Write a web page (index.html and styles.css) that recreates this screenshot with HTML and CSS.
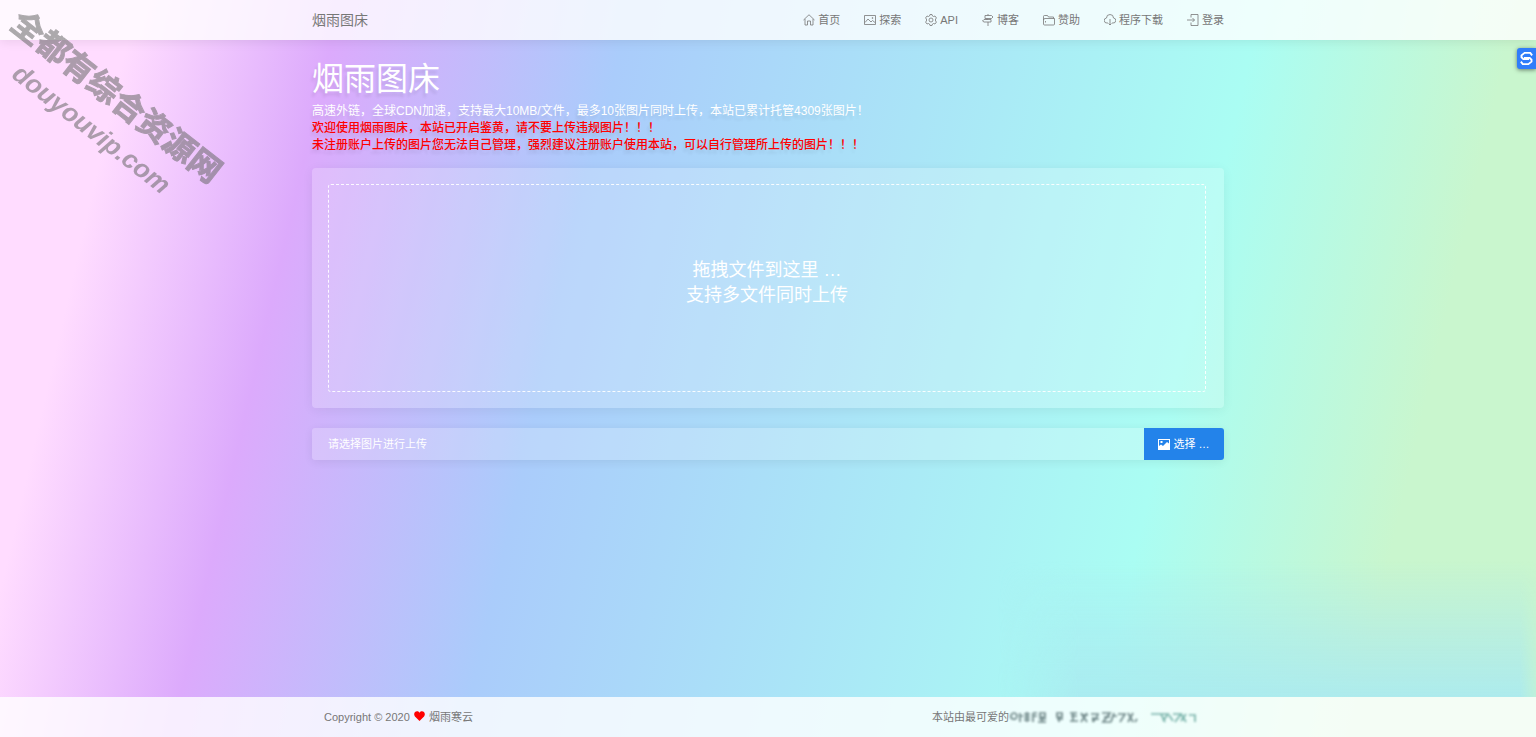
FILE: index.html
```
<!DOCTYPE html>
<html lang="zh-CN">
<head>
<meta charset="utf-8">
<title>烟雨图床</title>
<link rel="stylesheet" href="styles.css">
</head>
<body>
<header class="topbar">
  <div class="container topbar-inner">
    <a class="brand" href="#">烟雨图床</a>
    <nav class="nav">
      <a href="#"><svg class="icon" viewBox="0 0 24 24"><path d="M1 12 12 1.500 23 12M4 10v12h5v-8h6v8h5V10"/></svg>首页</a>
      <a href="#"><svg class="icon" viewBox="0 0 24 24"><path d="M1 3h22v18H1zM2 17l6-7 6 6 3-3 5 4"/><circle cx="17" cy="8" r="1"/></svg>探索</a>
      <a href="#"><svg class="icon" viewBox="0 0 24 24"><path d="M10 1h4l1 3 2 1 3-1 3 4-2 2v4l2 2-3 4-3-1-2 1-1 3h-4l-1-3-2-1-3 1-3-4 2-2v-4L1 8l3-4 3 1 2-1z"/><circle cx="12" cy="12" r="4"/></svg>API</a>
      <a href="#"><svg class="icon" viewBox="0 0 24 24"><path d="M12 0v3M6 3h13l3 3-3 3H6zM10 9v3M18 16H4l-3-2 3-3h14zM12 16v8"/></svg>博客</a>
      <a href="#"><svg class="icon" viewBox="0 0 24 24"><path d="M1 20V5q0-2 2-2h6l2 3h10v3M1 20q0 2 2 2h18q2 0 2-2V9H4q-3 0-3 3M5 14v3"/></svg>赞助</a>
      <a href="#"><svg class="icon" viewBox="0 0 24 24"><path d="M8 18H6a5 5 0 0 1-1-10 7 7 0 0 1 14 0 5 5 0 0 1-1 10h-2M12 10v12M9 19l3 3 3-3"/></svg>程序下载</a>
      <a href="#"><svg class="icon" viewBox="0 0 24 24"><path d="M8 7V1h14v22H8v-6M0 12h15M11 8l4 4-4 4"/></svg>登录</a>
    </nav>
  </div>
</header>

<main class="container main">
  <h1 class="title">烟雨图床</h1>
  <p class="intro">高速外链，全球CDN加速，支持最大10MB/文件，最多10张图片同时上传，本站已累计托管4309张图片！</p>
  <p class="intro notice">欢迎使用烟雨图床，本站已开启鉴黄，请不要上传违规图片！！！</p>
  <p class="intro notice">未注册账户上传的图片您无法自己管理，强烈建议注册账户使用本站，可以自行管理所上传的图片！！！</p>

  <section class="panel">
    <div class="dropzone">拖拽文件到这里 …<br>支持多文件同时上传</div>
  </section>

  <div class="picker">
    <input class="picker-input" type="text" aria-label="图片" placeholder="请选择图片进行上传" readonly>
    <button class="picker-button" type="button"><svg class="icon-solid" viewBox="0 0 24 22"><path fill-rule="evenodd" d="M0 0h24v22H0zM2 2v12l4-3 4 3 8-8 4 3V2zM5 4h4v4H5z"/></svg>选择 …</button>
  </div>
</main>

<footer class="footer">
  <div class="container footer-inner">
    <p>Copyright © 2020 <svg class="heart" viewBox="0 0 24 22"><path d="M12 22 2 12C-4 4 7-4 12 4c5-8 16 0 10 8z"/></svg> 烟雨寒云</p>
    <p class="credit">本站由最可爱的<svg class="smear" viewBox="0 0 192 12"><path d="M2 4q3-4 6 0 0 5-4 4-3-1-2-4M11 2v9M10 5h4M15 3h6M15 6h6M18 1v10M15 9h6M24 2h4M24 5h4M24 2v9M31 2h5v4h-5zM30 8h7M33 6v5M29 11h8M48 2h5v4h-5zM48 8h6M50 6v5M61 2h7M62 5h6M61 10h8M64 2v8M72 2l6 9M78 2l-6 9M72 4h7M82 3h8M84 6v5M89 4l-5 7M83 8h7M93 2h8l-7 9h8M95 6h6M105 2l-3 9M103 5h5M109 3h7l-5 8M119 2l5 9M124 2l-5 9M128 8l-2 3"/><path class="smear-tint" d="M142 3h10l4 8M150 3h9l-5 7M160 4l4 6M164 3h8l-6 8M172 3l5 8M177 3l-5 7M180 4h6v7"/></svg></p>
  </div>
</footer>

<div class="haze" aria-hidden="true"></div>
<div class="watermark">全都有综合资源网<br><span class="watermark-url">douyouvip.com</span></div>
<button class="side-badge" type="button" aria-label="S"><svg viewBox="0 0 24 24"><path d="M21 7 18 3H9L4 7v3l3 3h9M3 17l3 4h9l5-4v-3l-3-3H8"/></svg></button>
</body>
</html>
```
FILE: styles.css
```
* { box-sizing: border-box; }

body {
  position: relative;
  display: flex;
  flex-direction: column;
  min-height: 100vh;
  margin: 0;
  overflow: hidden;
  color: #777;
  font: 11px/17px "Liberation Sans", "Noto Sans CJK SC", sans-serif;
  background: linear-gradient(103deg, #ffdcff 0%, #ffdcff 8%, #dcaafc 20%, #aaccfb 37%, #aafdf3 74%, #c9f6ce 89%, #c9f6ce 100%);
}

h1, p { margin: 0; }
a { color: inherit; text-decoration: none; }

.container {
  width: 100%;
  max-width: 936px;
  margin: 0 auto;
  padding: 0 12px;
}

.topbar {
  background: rgba(255, 255, 255, .8);
  box-shadow: 0 2px 10px rgba(0, 0, 0, .08);
}

.topbar-inner {
  display: flex;
  align-items: center;
  justify-content: space-between;
  height: 40px;
}

.brand { font-size: 14px; }

.nav {
  display: flex;
  gap: 24px;
}

.nav a {
  display: flex;
  align-items: center;
  gap: 3px;
}

.icon {
  width: 12px;
  height: 12px;
  fill: none;
  stroke: currentColor;
  stroke-width: 1.6;
}

.main {
  flex: 1;
  padding-top: 19px;
}

.title {
  margin-bottom: 4px;
  color: #fff;
  font-size: 32px;
  font-weight: 400;
  line-height: 40px;
  text-shadow: -2px 4px 3px rgba(0, 0, 0, .08);
}

.intro {
  color: #fff;
  font-size: 12px;
  text-shadow: -2px 4px 3px rgba(0, 0, 0, .08);
}

.notice {
  color: #f00;
  font-weight: 500;
}

.panel {
  margin-top: 14px;
  padding: 16px 18px 16px 16px;
  border-radius: 4px;
  background: rgba(255, 255, 255, .2);
  box-shadow: 0 2px 12px rgba(0, 0, 0, .06);
}

.dropzone {
  min-height: 208px;
  padding-top: 73px;
  border: 1px dashed rgba(255, 255, 255, .9);
  border-radius: 3px;
  color: #fff;
  font-size: 18px;
  line-height: 25px;
  text-align: center;
}

.picker {
  display: flex;
  height: 32px;
  margin-top: 20px;
  border-radius: 3px;
  box-shadow: 0 2px 10px rgba(0, 0, 0, .07);
}

.picker-input {
  flex: 1;
  min-width: 0;
  padding: 0 16px;
  border: 0;
  border-radius: 3px 0 0 3px;
  color: #fff;
  font: inherit;
  background: rgba(255, 255, 255, .2);
}

.picker-input::placeholder { color: #fff; opacity: 1; }

.picker-button {
  display: flex;
  align-items: center;
  justify-content: center;
  gap: 3px;
  width: 80px;
  padding: 0;
  border: 0;
  border-radius: 0 3px 3px 0;
  color: #fff;
  font: inherit;
  background: #2383ea;
}

.icon-solid {
  width: 12px;
  height: 11px;
  fill: currentColor;
}

.footer { background: rgba(255, 255, 255, .8); }

.footer-inner {
  display: flex;
  align-items: center;
  justify-content: space-between;
  height: 40px;
  padding: 0 24px;
}

.heart {
  width: 11px;
  height: 10px;
  margin: 0 1px;
  fill: #f00;
}

.credit {
  display: flex;
  align-items: center;
}

.smear {
  width: 192px;
  height: 12px;
  margin-right: 11px;
  fill: none;
  stroke: #6f8788;
  stroke-width: 1.7;
  filter: blur(1px);
}

.smear-tint { stroke: #79b3aa; }

.haze {
  position: absolute;
  right: 0;
  bottom: 40px;
  width: 35%;
  height: 136px;
  background: linear-gradient(rgba(170, 232, 240, 0), rgba(170, 232, 240, .5) 55%, rgba(170, 234, 240, .9));
  -webkit-mask-image: linear-gradient(90deg, transparent, #000 15%, #000 97%, rgba(0, 0, 0, .4));
  mask-image: linear-gradient(90deg, transparent, #000 15%, #000 97%, rgba(0, 0, 0, .4));
  pointer-events: none;
}

.watermark {
  position: absolute;
  top: 74px;
  left: -34px;
  width: 276px;
  color: #696969;
  font-size: 32px;
  font-weight: 700;
  line-height: 38px;
  text-align: center;
  opacity: .55;
  transform: rotate(38deg);
  -webkit-text-stroke: 1px #696969;
  pointer-events: none;
}

.watermark-url {
  font-size: 26px;
  font-style: italic;
  -webkit-text-stroke-width: 0;
}

.side-badge {
  position: absolute;
  top: 48px;
  right: 0;
  display: flex;
  align-items: center;
  justify-content: center;
  width: 19px;
  height: 21px;
  padding: 0;
  border: 0;
  border-radius: 3px 0 0 3px;
  background: #2f7dfa;
  box-shadow: 0 1px 4px rgba(0, 0, 0, .5);
}

.side-badge svg {
  flex: none;
  width: 15px;
  height: 15px;
  fill: none;
  stroke: #fff;
  stroke-width: 3;
}
```
